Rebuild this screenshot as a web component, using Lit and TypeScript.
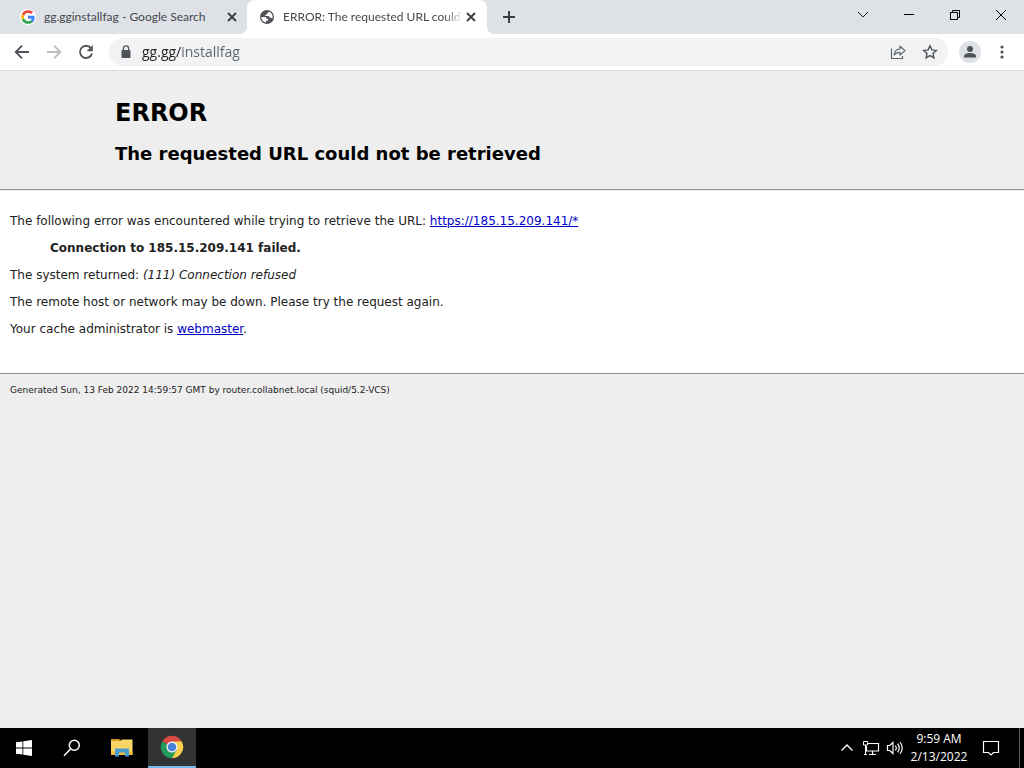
import { LitElement, html, css, svg } from "lit";
import { customElement, property } from "lit/decorators.js";

const uiFont = css`"Segoe UI", "Open Sans", "Noto Sans", sans-serif`;

const googleIcon = html`<svg width="16" height="16" viewBox="0 0 48 48" aria-hidden="true">
  <circle cx="24" cy="24" r="24" fill="#fff"/>
  <path fill="#ea4335" d="M24 11.5c3.500 0 6.700 1.200 9.200 3.600l6-6C35.400 5.500 30.200 3.500 24 3.500 16 3.500 9 8 5.600 14.700l7 5.400C14.300 15 18.700 11.500 24 11.500z"/>
  <path fill="#4285f4" d="M44 24.500c0-1.600-.2-3.100-.4-4.500H24v9h11.200c-.5 2.700-2 4.800-4.100 6.300l6.700 5.200C41.800 36.800 44 31.200 44 24.500z"/>
  <path fill="#fbbc05" d="M12.600 28a13 13 0 0 1 0-7.900l-7-5.400a21 21 0 0 0 0 18.700z"/>
  <path fill="#34a853" d="M24 44.500c5.600 0 10.400-1.900 13.800-5l-6.700-5.200C29.200 35.600 26.900 36.400 24 36.400c-5.300 0-9.700-3.500-11.400-8.400l-7 5.400C9 40 16 44.500 24 44.500z"/>
</svg>`;

const globeIcon = html`<svg width="16" height="16" viewBox="0 0 16 16" aria-hidden="true">
  <circle cx="8" cy="8" r="7" fill="#505357"/>
  <path fill="#fff" d="M2.400 8.100h3.300c1.300 0 2 .8 2 1.800h1.400v1.900H7v1.700C4.300 13.200 2.300 10.900 2.400 8.100z"/>
  <path fill="#fff" d="M9.600 2.600c2.400.7 4 2.900 4 5.400 0 .5-.1 1-.2 1.400-.4-.5-.9-.7-1.500-.7h-1.100c-.3-1.100-.9-1.600-2-1.600H6.900c-.9 0-.9-1.700 0-1.700h1.200V4.200c1 0 1.500-.6 1.500-1.600z"/>
</svg>`;

const closeTab = svg`<path d="M4 4l8 8M12 4l-8 8" stroke="#3c4043" stroke-width="1.900" fill="none"/>`;

@customElement("browser-tab")
class BrowserTab extends LitElement {
  @property() label = "";
  @property() icon: unknown = null;
  @property({ type: Boolean, reflect: true }) active = false;

  static styles = css`
    :host { display: flex; align-items: center; box-sizing: border-box; width: 240px; height: 34px; padding: 0 8px 0 12px; border-radius: 8px 8px 0 0; position: relative; }
    :host([active]) { background: #fff; }
    :host([active])::before, :host([active])::after { content: ""; position: absolute; bottom: 0; width: 8px; height: 8px; }
    :host([active])::before { left: -8px; background: radial-gradient(circle at 0 0, transparent 8px, #fff 8px); }
    :host([active])::after { right: -8px; background: radial-gradient(circle at 8px 0, transparent 8px, #fff 8px); }
    .label { flex: 1; min-width: 0; margin-left: 8px; overflow: hidden; white-space: nowrap; font: 12px/18px "Segoe UI", Lato, sans-serif; color: #45494d; }
    :host([active]) .label { -webkit-mask-image: linear-gradient(to right, #000 90%, transparent); mask-image: linear-gradient(to right, #000 90%, transparent); }
    button { display: flex; padding: 0; border: 0; background: none; }
    svg { display: block; flex: none; }
  `;

  render() {
    return html`${this.icon}
      <span class="label">${this.label}</span>
      <button aria-label="Close tab"><svg width="16" height="16" viewBox="0 0 16 16">${closeTab}</svg></button>`;
  }
}

@customElement("browser-chrome")
class BrowserChrome extends LitElement {
  static styles = css`
    :host { display: block; font-family: ${uiFont}; }
    button { display: flex; align-items: center; justify-content: center; padding: 0; border: 0; background: none; }
    svg { display: block; flex: none; }
    .strip { display: flex; align-items: stretch; height: 34px; background: #dee1e6; }
    .tabs { display: flex; padding-left: 8px; }
    .tabs browser-tab + browser-tab { margin-left: -1px; }
    .new { width: 28px; height: 34px; margin-left: 8px; }
    .window { display: flex; margin-left: auto; height: 29px; }
    .window button { width: 46px; }
    .toolbar { display: flex; align-items: center; height: 36px; padding: 0 6px; background: #fff; border-bottom: 1px solid #dcdcdc; }
    .nav { width: 32px; height: 28px; }
    .omnibox { display: flex; align-items: center; flex: 1; min-width: 0; height: 28px; margin: 0 6px 0 7px; padding: 0 2px 0 9px; border-radius: 14px; background: #f1f3f4; }
    .omnibox input { flex: 1; min-width: 0; margin-left: 8px; padding: 0; border: 0; outline: 0; font: 14px/20px ${uiFont}; color: transparent; background: linear-gradient(to right, #202124 39px, #5f6368 39px); -webkit-background-clip: text; background-clip: text; }
    .omnibox button { width: 32px; height: 28px; }
    .avatar { width: 32px; height: 28px; }
    .menu { width: 32px; height: 28px; }
  `;

  render() {
    return html`
      <div class="strip">
        <div class="tabs">
          <browser-tab .label=${"gg.gginstallfag - Google Search"} .icon=${googleIcon}></browser-tab>
          <browser-tab active .label=${"ERROR: The requested URL could"} .icon=${globeIcon}></browser-tab>
        </div>
        <button class="new" aria-label="New tab"><svg width="14" height="14" viewBox="0 0 14 14"><path d="M7 1v12M1 7h12" stroke="#3c4043" stroke-width="2"/></svg></button>
        <div class="window">
          <button aria-label="Search tabs"><svg width="12" height="12" viewBox="0 0 12 12"><path d="M1 3l5 5 5-5" stroke="#222" fill="none"/></svg></button>
          <button aria-label="Minimize"><svg width="12" height="12" viewBox="0 0 12 12"><path d="M1 5.500h10" stroke="#000"/></svg></button>
          <button aria-label="Restore"><svg width="12" height="12" viewBox="0 0 12 12"><path d="M1.500 3.500h7v7h-7zM3.500 3.500v-2h7v7h-2" stroke="#000" fill="none"/></svg></button>
          <button aria-label="Close"><svg width="12" height="12" viewBox="0 0 12 12"><path d="M1 1l10 10M11 1L1 11" stroke="#000"/></svg></button>
        </div>
      </div>
      <div class="toolbar">
        <button class="nav" aria-label="Back"><svg width="16" height="16" viewBox="0 0 16 16"><path d="M15 8H2M8 1.700L1.700 8 8 14.300" stroke="#505357" stroke-width="1.800" fill="none"/></svg></button>
        <button class="nav" aria-label="Forward"><svg width="16" height="16" viewBox="0 0 16 16"><path d="M1 8h13M8 1.700L14.300 8 8 14.300" stroke="#babcbe" stroke-width="1.800" fill="none"/></svg></button>
        <button class="nav" aria-label="Reload"><svg width="16" height="16" viewBox="0 0 16 16"><path d="M12.900 4.100A6.100 6.100 0 1 0 14 9.500" stroke="#505357" stroke-width="1.900" fill="none"/><path d="M14.800 1v6.200H8.600z" fill="#505357"/></svg></button>
        <div class="omnibox">
          <svg width="16" height="16" viewBox="0 0 16 16" aria-hidden="true"><rect x="3.500" y="6" width="9" height="8" rx="1" fill="#505357"/><path d="M5.400 6.500V4.400a2.600 2.600 0 0 1 5.200 0v2.100" stroke="#505357" stroke-width="1.300" fill="none"/></svg>
          <input type="text" aria-label="Address" .value=${"gg.gg/installfag"} />
          <button aria-label="Share"><svg width="16" height="16" viewBox="0 0 16 16"><path d="M1.500 4.500v10h11V12" stroke="#5f6368" stroke-width="1.200" fill="none"/><path d="M4.200 11C4.600 7.300 6.600 5.200 10 5V2.200L15 6.600 10 11V8.300C7.400 8.300 5.600 9.100 4.200 11z" stroke="#5f6368" stroke-width="1.200" stroke-linejoin="round" fill="none"/></svg></button>
          <button aria-label="Bookmark"><svg width="16" height="16" viewBox="0 0 16 16"><path d="M8 1.800l1.850 4.100 4.450.5-3.300 3 .9 4.400L8 11.600l-3.900 2.200.9-4.400-3.300-3 4.450-.5z" stroke="#505357" stroke-width="1.400" fill="none"/></svg></button>
        </div>
        <button class="avatar" aria-label="Profile"><svg width="22" height="22" viewBox="0 0 22 22"><circle cx="11" cy="11" r="11" fill="#dee1e6"/><circle cx="11" cy="8" r="3" fill="#505357"/><path d="M5 16.500v-1.300c0-2.200 3-3.200 6-3.200s6 1 6 3.200v1.300z" fill="#505357"/></svg></button>
        <button class="menu" aria-label="Menu"><svg width="4" height="16" viewBox="0 0 4 16" fill="#505357"><circle cx="2" cy="3" r="1.600"/><circle cx="2" cy="8" r="1.600"/><circle cx="2" cy="13" r="1.600"/></svg></button>
      </div>`;
  }
}

@customElement("error-page")
class ErrorPage extends LitElement {
  static styles = css`
    :host { display: block; background: #eee; color: #222; font: 12px/15px Verdana, "DejaVu Sans", sans-serif; }
    .titles { padding: 25px 10px 23px 115px; color: #000; }
    h1 { margin: 0; font-size: 24px; line-height: 34px; }
    h2 { margin: 12px 0 0; font-size: 18px; line-height: 24px; }
    hr { height: 1px; margin: 0; border: 0; border-top: 1px solid #929292; background: #eee; }
    .content { padding: 23px 10px 36px; background: #fff; }
    p { margin: 0 0 12px; }
    .content p:last-child { margin-bottom: 0; }
    blockquote { margin: 0 40px 12px; }
    blockquote p { margin: 0; }
    a { color: #0000c8; }
    .footer { padding: 9px 10px; }
    .footer p { margin: 0; font-size: 9px; line-height: 13px; }
  `;

  render() {
    return html`
      <header class="titles">
        <h1>ERROR</h1>
        <h2>The requested URL could not be retrieved</h2>
      </header>
      <hr />
      <main class="content">
        <p>The following error was encountered while trying to retrieve the URL: <a href="https://185.15.209.141/*">https://185.15.209.141/*</a></p>
        <blockquote><p><b>Connection to 185.15.209.141 failed.</b></p></blockquote>
        <p>The system returned: <i>(111) Connection refused</i></p>
        <p>The remote host or network may be down. Please try the request again.</p>
        <p>Your cache administrator is <a href="mailto:webmaster">webmaster</a>.</p>
      </main>
      <hr />
      <footer class="footer"><p>Generated Sun, 13 Feb 2022 14:59:57 GMT by router.collabnet.local (squid/5.2-VCS)</p></footer>`;
  }
}

@customElement("task-bar")
class TaskBar extends LitElement {
  static styles = css`
    :host { display: flex; justify-content: space-between; height: 40px; background: #000; color: #fff; font: 12px/18px ${uiFont}; }
    .group { display: flex; }
    button { display: flex; align-items: center; justify-content: center; padding: 0; border: 0; background: none; color: inherit; font: inherit; }
    svg { display: block; flex: none; }
    .app { width: 48px; }
    .files { width: 52px; }
    .running { background: #333; border-bottom: 2px solid #76b9ed; }
    .tray { width: 24px; }
    .clock { width: 64px; text-align: center; }
    .notes { width: 40px; }
    .desktop { width: 5px; margin-left: 8px; border-left: 1px solid #555; }
  `;

  render() {
    return html`
      <div class="group">
        <button class="app" aria-label="Start"><svg width="16" height="16" viewBox="0 0 16 16" fill="#fff"><path d="M0 2.300L6.500 1.400v6.100H0zM7.300 1.300L16 0v7.500H7.300zM0 8.400h6.500v6.200L0 13.700zM7.300 8.400H16V16l-8.700-1.300z"/></svg></button>
        <button class="app" aria-label="Search"><svg width="18" height="18" viewBox="0 0 18 18" stroke="#fff" stroke-width="1.500" fill="none"><circle cx="11.300" cy="6.300" r="5"/><path d="M7.800 9.800L1 16.800"/></svg></button>
        <button class="files" aria-label="File Explorer"><svg width="22" height="20" viewBox="0 0 22 20"><path d="M0 1h8l2 2h-10z" fill="#d99b26"/><path d="M0 3h9l2-1.500h10.500V17H0z" fill="#f8d565"/><path d="M0 13.500h21.500v3.500H0z" fill="#eebd42"/><path d="M4 10.500h14v8h-4V14.500H8v4H4z" fill="#4a9bcf"/></svg></button>
        <button class="app running" aria-label="Google Chrome"><svg width="24" height="24" viewBox="0 0 24 24"><path d="M12 12L2.300 6.400a11.200 11.200 0 0 1 19.400 0z" fill="#d94b42"/><path d="M12 12L2.300 6.400A11.200 11.200 0 0 0 12 23.200L16.800 14.800z" fill="#249b5b"/><path d="M12 6.400h9.700A11.200 11.200 0 0 1 12 23.200l4.850-8.400z" fill="#fbd34e"/><circle cx="12" cy="12" r="5.600" fill="#f3f3f3"/><circle cx="12" cy="12" r="4.300" fill="#4a84dd"/></svg></button>
      </div>
      <div class="group">
        <button class="tray" aria-label="Show hidden icons"><svg width="14" height="14" viewBox="0 0 14 14"><path d="M1.500 9.500L7 4l5.500 5.500" stroke="#fff" stroke-width="1.400" fill="none"/></svg></button>
        <button class="tray" aria-label="Network"><svg width="18" height="16" viewBox="0 0 18 16" stroke="#fff" fill="none"><path d="M6 3.500h10.500v7.500H4.500V6M10.500 11v3M7 14.500h7" stroke-width="1.200"/><path d="M1.500 1.500h4v3.500h-4zM3.500 5v9M2 14.500h3"/></svg></button>
        <button class="tray" aria-label="Volume"><svg width="18" height="16" viewBox="0 0 18 16" stroke="#fff" fill="none"><path d="M1.500 5.500h2.300L7 2.500v11L3.800 10.500H1.500zM9.300 5.500q2 2.500 0 5M11.600 3.700q3.200 4.300 0 8.600M14 2q4.400 6 0 12" stroke-width="1.200"/></svg></button>
        <button class="clock"><span>9:59 AM<br />2/13/2022</span></button>
        <button class="notes" aria-label="Notifications"><svg width="18" height="18" viewBox="0 0 18 18"><path d="M1.500 2.500h15v11h-5L9 16l-2.500-2.500h-5z" stroke="#fff" stroke-width="1.200" fill="none"/></svg></button>
        <button class="desktop" aria-label="Show desktop"></button>
      </div>`;
  }
}

@customElement("app-root")
class AppRoot extends LitElement {
  static styles = css`
    :host { display: flex; flex-direction: column; min-height: 100vh; }
    error-page { flex: 1; }
  `;

  render() {
    return html`<browser-chrome></browser-chrome><error-page></error-page><task-bar></task-bar>`;
  }
}
